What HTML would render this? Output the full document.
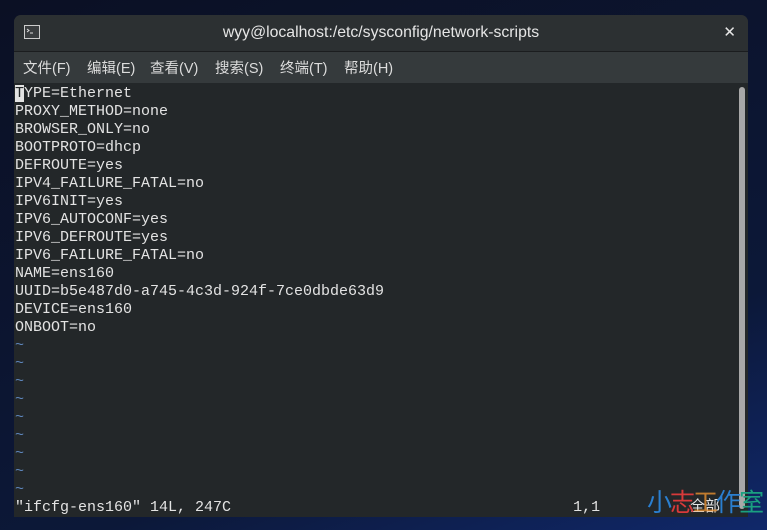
<!DOCTYPE html><html><head><meta charset="utf-8"><style>
body{margin:0;width:767px;height:530px;background:linear-gradient(160deg,#0b1024,#0c1838 70%,#10286a);position:relative;overflow:hidden;font-family:"Liberation Sans","Noto Sans CJK SC",sans-serif}
.win{position:absolute;left:14px;top:15px;width:734px;height:502px;background:#232729;border-radius:7px 7px 0 0;overflow:hidden}
.title{height:36px;background:#2c3032;border-bottom:1px solid #1b1d1f;color:#e6e6e6;font-size:15.8px;text-align:center;line-height:36px;position:relative}
.menu{height:31px;background:#353a3c;color:#dcdcdc;font-size:14.5px;line-height:34px;padding-left:9px;white-space:nowrap}
.menu span{display:inline-block}
.term{position:absolute;left:1px;top:70px;font-family:"Liberation Mono",monospace;font-size:15px;line-height:18px;color:#e3e3e3;white-space:pre}
.t{color:#5e86bd}
.sb{position:absolute;left:725px;top:72px;width:6px;height:422px;background:#a8a8a8;border-radius:3px}
</style></head><body>
<div class="win">
<div class="title"><svg style="position:absolute;left:10px;top:10px" width="16" height="14"><rect x="0.5" y="0.5" width="15" height="13" fill="#3a3d3f" stroke="#ccc"/><path d="M3 4l2 1.5-2 1.5M6 8h3" stroke="#ddd" fill="none"/></svg>wyy@localhost:/etc/sysconfig/network-scripts<span style="position:absolute;right:12px;top:0;font-size:15px">✕</span></div>
<div class="menu"><span style="width:64px">文件(F)</span><span style="width:63px">编辑(E)</span><span style="width:65px">查看(V)</span><span style="width:65px">搜索(S)</span><span style="width:64px">终端(T)</span><span>帮助(H)</span></div>
<div class="term"><span style="background:#e3e3e3;color:#232729">T</span>YPE=Ethernet
PROXY_METHOD=none
BROWSER_ONLY=no
BOOTPROTO=dhcp
DEFROUTE=yes
IPV4_FAILURE_FATAL=no
IPV6INIT=yes
IPV6_AUTOCONF=yes
IPV6_DEFROUTE=yes
IPV6_FAILURE_FATAL=no
NAME=ens160
UUID=b5e487d0-a745-4c3d-924f-7ce0dbde63d9
DEVICE=ens160
ONBOOT=no
<span class="t">~
~
~
~
~
~
~
~
~</span>
"ifcfg-ens160" 14L, 247C                                      1,1          全部</div>
<div class="sb"></div>
</div>
<div style="position:absolute;left:647px;top:486px;font-size:25px;line-height:30px;font-family:'Noto Sans CJK SC',sans-serif;letter-spacing:-2px;white-space:nowrap"><span style="color:#2a7fd0">小</span><span style="color:#d83a3a">志</span><span style="color:#e89030;opacity:.8">工</span><span style="color:#2a7fd0">作</span><span style="color:#1aa080">室</span></div>
</body></html>
